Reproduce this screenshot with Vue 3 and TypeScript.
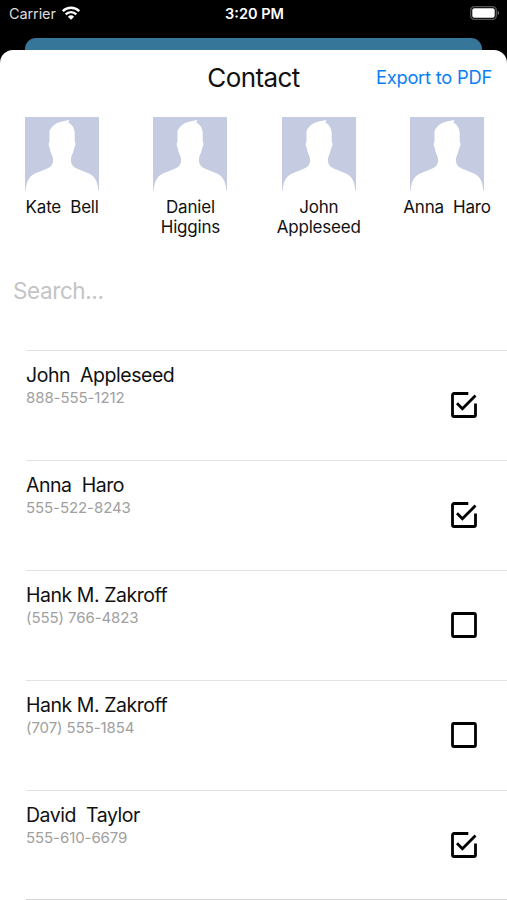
<script setup lang="ts">
import { ref } from 'vue'

interface Contact {
  id: number
  name: string
  phone: string
  checked: boolean
}

const selected: string[] = ['Kate  Bell', 'Daniel\nHiggins', 'John\nAppleseed', 'Anna  Haro']

const query = ref('')

const contacts = ref<Contact[]>([
  { id: 1, name: 'John  Appleseed', phone: '888-555-1212', checked: true },
  { id: 2, name: 'Anna  Haro', phone: '555-522-8243', checked: true },
  { id: 3, name: 'Hank M. Zakroff', phone: '(555) 766-4823', checked: false },
  { id: 4, name: 'Hank M. Zakroff', phone: '(707) 555-1854', checked: false },
  { id: 5, name: 'David  Taylor', phone: '555-610-6679', checked: true },
])
</script>

<template>
  <div class="screen">
    <div class="status">
      <div class="carrier">
        <span>Carrier</span>
        <svg class="wifi" viewBox="0 0 18 14" width="18" height="14">
          <path d="M0.800 5.200a11.600 11.600 0 0 1 16.400 0" />
          <path d="M3.700 8.300a7.500 7.500 0 0 1 10.600 0" />
          <path class="dot" d="M9 13.800 5.900 10.700a4.500 4.500 0 0 1 6.200 0z" />
        </svg>
      </div>
      <span class="time">3:20 PM</span>
      <svg class="battery" viewBox="0 0 30 14" width="30" height="14">
        <rect x="0.7" y="0.7" width="25.6" height="12.6" rx="3.6" fill="none" stroke="#555" stroke-width="1.3" />
        <rect x="2.3" y="2.3" width="22.4" height="9.4" rx="2" fill="#fff" />
        <path d="M27.6 4.8c2.1.7 2.1 3.7 0 4.4z" fill="#666" />
      </svg>
    </div>
    <div class="behind"></div>
    <main class="sheet">
      <header class="head">
        <h1>Contact</h1>
        <button class="export" type="button">Export to PDF</button>
      </header>
      <section class="people">
        <div v-for="person in selected" :key="person" class="person">
          <svg class="avatar" viewBox="0 0 74 74" width="74" height="74">
            <rect width="74" height="74" fill="#c5cbe1" />
            <path
              fill="#fff"
              d="M0.500 74C1.500 64 4 59.500 10 56.500L20 52.500C25 50.500 27.500 48.500 28 44.500C28.200 42 28 40 27 38.500C26 36 25 33 24.600 30.500C23.600 29 23.200 26.500 24.500 24.500V14.500C26 9 31 6 36 4.700C39 4 42 3.300 44.500 3.300L43.300 5.300C47.500 8 49.700 12 49.700 16V24.500C51 26.500 50.500 29 49.400 30.500C49 33 48 36 46.800 38.500C46 40 45.900 42 46.100 44.500C46.500 48.500 49 50.500 54 52.500L64 56.500C70 59.500 72.500 64 73.500 74Z"
            />
          </svg>
          <span class="label">{{ person }}</span>
        </div>
      </section>
      <input v-model="query" class="search" type="text" placeholder="Search..." />
      <ul class="list">
        <li v-for="contact in contacts" :key="contact.id" class="row">
          <div class="info">
            <span class="name">{{ contact.name }}</span>
            <span class="phone">{{ contact.phone }}</span>
          </div>
          <svg class="check" viewBox="0 0 26 26" width="26" height="26" @click="contact.checked = !contact.checked">
            <template v-if="contact.checked">
              <path d="M17.300 1.500H3A1.500 1.500 0 0 0 1.500 3V23A1.500 1.500 0 0 0 3 24.500H23A1.500 1.500 0 0 0 24.500 23V11.500" />
              <path d="M6 11.200 11.400 16.700 24.500 3.600" />
            </template>
            <rect v-else x="1.500" y="1.500" width="23" height="23" rx="1.500" />
          </svg>
        </li>
      </ul>
    </main>
  </div>
</template>

<style>
body {
  margin: 0;
  background: #000;
}
</style>

<style scoped>
.screen {
  width: 507px;
  height: 900px;
  overflow: hidden;
  display: flex;
  flex-direction: column;
  background: #000;
  font-family: Inter, 'Liberation Sans', sans-serif;
  color: #111;
}
.status {
  height: 38px;
  box-sizing: border-box;
  padding: 5px 7px 0 9px;
  display: grid;
  grid-template-columns: 1fr auto 1fr;
  align-items: start;
  color: #fff;
  font-size: 14.5px;
  line-height: 18px;
}
.carrier {
  display: flex;
  gap: 6px;
  color: #ddd;
}
.carrier span {
  letter-spacing: -0.1px;
}
.wifi {
  margin-top: 1px;
  fill: none;
  stroke: #fff;
  stroke-width: 2.4;
}
.wifi .dot {
  fill: #fff;
  stroke: none;
}
.time {
  font-weight: 600;
  font-size: 14.5px;
}
.battery {
  justify-self: end;
  margin-top: 1px;
}
.behind {
  height: 12px;
  flex: none;
  margin: 0 25px;
  border-radius: 11px 11px 0 0;
  background: #367799;
}
.sheet {
  flex: 1;
  min-height: 0;
  display: flex;
  flex-direction: column;
  background: #fff;
  border-radius: 13px 13px 0 0;
}
.head {
  height: 67px;
  flex: none;
  box-sizing: border-box;
  padding: 0 15px 11px;
  display: grid;
  grid-template-columns: 1fr auto 1fr;
  align-items: center;
}
h1 {
  grid-column: 2;
  margin: 0;
  font-size: 26px;
  font-weight: 400;
  line-height: 32px;
  letter-spacing: -0.6px;
}
.export {
  justify-self: end;
  border: 0;
  padding: 0 0 2px;
  background: none;
  color: #0b7ef5;
  font: inherit;
  font-size: 18.3px;
  line-height: 24px;
  letter-spacing: -0.22px;
  white-space: nowrap;
}
.people {
  height: 148px;
  flex: none;
  display: grid;
  grid-template-columns: repeat(4, 128.3px);
  margin-left: -2px;
}
.person {
  display: flex;
  flex-direction: column;
  align-items: center;
  gap: 6px;
}
.avatar {
  flex: none;
}
.label {
  white-space: pre;
  text-align: center;
  font-size: 17px;
  line-height: 20px;
  letter-spacing: -0.2px;
}
.search {
  height: 50px;
  flex: none;
  box-sizing: border-box;
  margin: 0 13px 35px;
  padding: 0;
  border: 0;
  outline: 0;
  background: none;
  font: inherit;
  font-size: 22.5px;
  letter-spacing: -0.4px;
}
.search::placeholder {
  color: #c4c4c6;
  opacity: 1;
}
.list {
  margin: 0 0 0 26px;
  padding: 0;
  list-style: none;
}
.row {
  height: 110px;
  box-sizing: border-box;
  border-top: 1px solid #e3e3e3;
  padding: 0 30px 1px 0;
  display: flex;
  align-items: center;
  justify-content: space-between;
}
.row:last-child {
  border-bottom: 1px solid #d4d4d4;
  padding-bottom: 0;
}
.info {
  align-self: flex-start;
  padding-top: 11px;
  display: flex;
  flex-direction: column;
}
.name {
  font-size: 19.5px;
  line-height: 26px;
  letter-spacing: -0.46px;
  white-space: pre;
}
.phone {
  font-size: 15px;
  line-height: 20px;
  letter-spacing: -0.08px;
  color: #a0a0a0;
}
.check {
  fill: none;
  stroke: #000;
  stroke-width: 2.8;
}
</style>
